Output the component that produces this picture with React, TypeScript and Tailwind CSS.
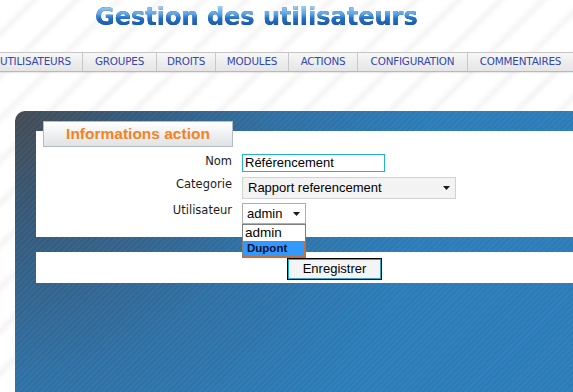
const navItems = [
  { label: 'UTILISATEURS', cls: 'w-[93px]' },
  { label: 'GROUPES', cls: 'w-[74px] border-l' },
  { label: 'DROITS', cls: 'w-[59px] border-l' },
  { label: 'MODULES', cls: 'w-[73px] border-l' },
  { label: 'ACTIONS', cls: 'w-[69px] border-l' },
  { label: 'CONFIGURATION', cls: 'w-[110px] border-l' },
  { label: 'COMMENTAIRES', cls: 'w-[106px] border-l' },
];

function Arrow() {
  return (
    <svg width="7" height="4" viewBox="0 0 7 4" className="block">
      <path d="M0 0h7L3.5 4z" fill="#1a1a1a" />
    </svg>
  );
}

export default function App() {
  return (
    <div className="h-[392px] w-full overflow-hidden bg-[image:repeating-linear-gradient(135deg,#ffffff_0px,#ffffff_18px,#f5f5f5_24px,#ffffff_30px)] font-['Liberation_Sans',Arial,sans-serif]">
      {/* titre */}
      <header className="h-[52px] pt-[5px] pl-[95px]">
        <h1 className="font-['DejaVu_Sans',sans-serif] text-[24px] leading-none font-bold bg-[image:linear-gradient(180deg,#a6d3f8_0%,#5aa3e8_38%,#2470c8_56%,#134f9e_100%)] bg-clip-text text-transparent [filter:drop-shadow(0_0_0.7px_#0b3a78)] w-max">
          Gestion des utilisateurs
        </h1>
      </header>

      {/* menu */}
      <nav className="flex h-[20px] ml-[-11px] border-y border-t-[#c6c6c6] border-b-[#b9b9b9] bg-[image:linear-gradient(180deg,#f7f7f7,#e5e5e5)] shadow-[0_1px_1px_rgba(0,0,0,0.08)]">
        {navItems.map((item) => (
          <a
            key={item.label}
            href="#"
            className={`${item.cls} shrink-0 border-[#c8c8c8] flex items-center justify-center font-['DejaVu_Sans',sans-serif] text-[10.4px] text-[#3347ae] tracking-[-0.2px]`}
          >
            {item.label}
          </a>
        ))}
      </nav>

      {/* panneau bleu */}
      <div className="mt-[39px] ml-[15px] h-[281px] rounded-tl-[10px] pt-[20px] pl-[21px] bg-[image:repeating-linear-gradient(135deg,rgba(255,255,255,0.035)_0px,rgba(255,255,255,0.035)_2px,transparent_2px,transparent_4px),radial-gradient(circle_at_0_0,#434a52_0px,#35597a_110px,#2f6fa3_260px,#2b7cb8_420px)]">
        <div className="relative flex flex-col bg-white h-[106px]">
          <div className="ml-[7px] -mt-[10px] w-[190px] h-[26px] border border-[#b3bcc4] bg-[image:linear-gradient(180deg,#ffffff,#e0e2e4)] flex items-center justify-center text-[15.5px] font-bold text-[#f5821f]">
            Informations action
          </div>

          <div className="mt-[7px] flex flex-col">
            <div className="flex items-start">
              <label className="w-[197px] pr-[1px] text-right font-['DejaVu_Sans',sans-serif] text-[11.5px] leading-[15px] text-[#1c1c1c]">
                Nom
              </label>
              <input
                readOnly
                value="Référencement"
                className="ml-[9px] w-[143px] h-[18px] border border-[#1fb3d1] bg-white pl-[2px] text-[13px] text-black outline-none"
              />
            </div>

            <div className="flex items-start mt-[5px]">
              <label className="w-[197px] pr-[1px] text-right font-['DejaVu_Sans',sans-serif] text-[11.5px] leading-[15px] text-[#1c1c1c]">
                Categorie
              </label>
              <div className="ml-[9px] w-[214px] h-[22px] border border-[#d2d2d2] bg-[#f3f3f3] flex items-center pl-[5px] pr-[5px] text-[13px] text-black">
                <span className="flex-1">Rapport referencement</span>
                <Arrow />
              </div>
            </div>

            <div className="flex items-start mt-[4px]">
              <label className="w-[197px] pr-[1px] text-right font-['DejaVu_Sans',sans-serif] text-[11.5px] leading-[15px] text-[#1c1c1c]">
                Utilisateur
              </label>
              <div className="relative ml-[9px]">
                <div className="w-[64px] h-[21px] border border-[#aeaeae] bg-white flex items-center pl-[4px] pr-[5px] text-[13px] text-black">
                  <span className="flex-1">admin</span>
                  <Arrow />
                </div>
                <div className="absolute z-10 left-0 top-[21px] w-[64px] border border-[#7f7f7f] bg-white">
                  <div className="h-[16px] flex items-center pl-[2px] text-[13.5px] text-black">admin</div>
                  <div className="h-[16px] flex items-center pl-[4px] bg-[#3399ff] outline-1 outline-dotted outline-[#c0703a] -outline-offset-1 text-[11.5px] font-bold text-[#0d1030]">
                    Dupont
                  </div>
                </div>
              </div>
            </div>
          </div>
        </div>

        <div className="bg-white h-[31px] mt-[15px] pt-[4px] pl-[251px]">
          <button className="w-[95px] h-[22px] border border-black bg-[#f4f4f4] shadow-[inset_0_0_0_1px_#1aaed6] text-[13px] text-black leading-none">
            Enregistrer
          </button>
        </div>
      </div>
    </div>
  );
}
